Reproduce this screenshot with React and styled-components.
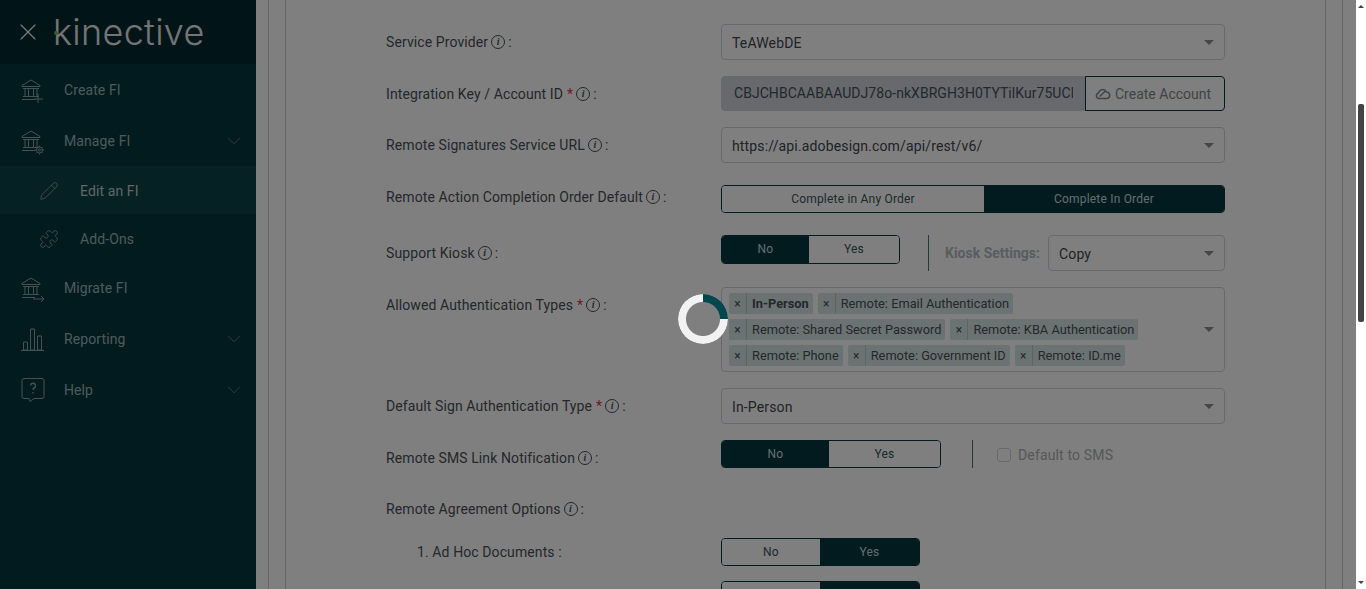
import React from "react";
import styled, { createGlobalStyle } from "styled-components";
import { Pencil, Puzzle, X, ChevronDown } from "lucide-react";

const GlobalStyle = createGlobalStyle`
  html, body {
    margin: 0;
    height: 100%;
    overflow: hidden;
    background: #fff;
  }
  * { box-sizing: border-box; }
`;

const Page = styled.div`
  position: relative;
  display: flex;
  height: 589px;
  overflow: hidden;
  font-family: Roboto, "Liberation Sans", sans-serif;
  font-size: 14px;
  color: #495057;
`;

/* sidebar */
const Sidebar = styled.aside`
  flex: 0 0 256px;
  background: #04373e;
  color: #9ab4b8;
`;

const Brand = styled.div`
  display: flex;
  align-items: center;
  height: 64px;
  padding-left: 14px;
  gap: 11px;
  background: #022a30;
  color: #f0f0f0;
`;

const Logo = styled.div`
  position: relative;
  font-family: Inter, sans-serif;
  font-weight: 300;
  font-size: 36px;
  line-height: 40px;
  letter-spacing: 0.3px;
  color: #e8e8e8;
  margin-top: -1px;
`;

const LogoDot = styled.i`
  position: absolute;
  left: 1px;
  top: 19px;
  width: 4px;
  height: 4px;
  border-radius: 50%;
  background: #5fb846;
`;

const NavItem = styled.div`
  display: flex;
  align-items: center;
  height: ${(p) => (p.$sub ? 48 : 51)}px;
  padding-left: ${(p) => (p.$sub ? 39 : 20)}px;
  padding-right: 11px;
  padding-top: ${(p) => (p.$sub ? 1 : 0)}px;
  background: ${(p) => (p.$active ? "#0a4248" : "transparent")};
  color: ${(p) => (p.$active ? "#c2cdce" : "inherit")};
`;

const NavIcon = styled.span`
  display: flex;
  align-items: center;
  width: ${(p) => (p.$sub ? 41 : 44)}px;
  color: #8ba5a9;
`;

const NavLabel = styled.span`
  flex: 1;
  letter-spacing: 0.1px;
`;

/* main column */
const Main = styled.main`
  flex: 1;
  min-width: 0;
  padding: 0 13px 0 12px;
`;

const OuterCard = styled.div`
  height: 100%;
  border: solid #cdcdcd;
  border-width: 0 1px;
  padding: 0 16px;
`;

const InnerCard = styled.div`
  height: 100%;
  border: solid #cdcdcd;
  border-width: 0 1px;
  padding: 24px 100px 0;
`;

const Form = styled.div`
  display: flex;
  flex-direction: column;
  gap: 16px;
`;

const Row = styled.div`
  display: grid;
  grid-template-columns: 335px 504px;
  height: ${(p) => p.$h || 36}px;
`;

const SubRows = styled.div`
  display: flex;
  flex-direction: column;
  gap: 7px;
`;

const Label = styled.div`
  display: flex;
  align-items: center;
  height: 36px;
  padding-left: ${(p) => (p.$indent ? 31 : 0)}px;
  letter-spacing: 0.1px;
`;

const Star = styled.span`
  color: #dc3545;
  margin-left: 4px;
`;

const InfoDot = styled.span`
  display: inline-flex;
  align-items: center;
  justify-content: center;
  width: 14px;
  height: 14px;
  margin: -1px 3px 0 3px;
  border: 1px solid #495057;
  border-radius: 50%;
  font-family: "Liberation Serif", serif;
  font-style: italic;
  font-weight: 700;
  font-size: 10px;
  line-height: 1;
`;

const Field = styled.div`
  display: flex;
  align-items: center;
  justify-content: space-between;
  height: 36px;
  padding: 1px 10px 0;
  border: 1px solid #ced4da;
  border-radius: 4px;
  background: #fff;
  letter-spacing: 0.15px;
  color: #3f4650;
`;

const Caret = styled.i`
  width: 0;
  height: 0;
  border-left: 5px solid transparent;
  border-right: 5px solid transparent;
  border-top: 5px solid #8c8c8c;
`;

const KeyGroup = styled.div`
  display: flex;
  height: 35px;
`;

const KeyInput = styled.div`
  flex: 0 0 365px;
  padding: 0 12px;
  line-height: 33px;
  background: #ced2d9;
  border: 1px solid #ced4da;
  border-radius: 4px 0 0 4px;
  white-space: nowrap;
  overflow: hidden;
  letter-spacing: 0.05px;
  color: #495057;
`;

const KeyClip = styled.div`
  overflow: hidden;
  width: 339px;
`;

const KeyButton = styled.div`
  flex: 1;
  display: flex;
  align-items: center;
  gap: 4px;
  padding-left: 9px;
  border: 1px solid #04373e;
  border-radius: 0 4px 4px 0;
  margin-left: -1px;
  letter-spacing: 0;
  color: #7d8a8c;
`;

const Toggle = styled.div`
  display: flex;
  width: ${(p) => p.$w}px;
  height: ${(p) => p.$tall || 28}px;
  margin-top: ${(p) => p.$top || 0}px;
  border: 1px solid #04373e;
  border-radius: 4px;
  overflow: hidden;
`;

const ToggleOption = styled.div`
  width: ${(p) => p.$w}px;
  flex: ${(p) => (p.$w ? "none" : 1)};
  display: flex;
  align-items: center;
  justify-content: center;
  padding-bottom: 1px;
  font-size: 12px;
  font-weight: 400;
  letter-spacing: 0.2px;
  background: ${(p) => (p.$on ? "#04373e" : "#fff")};
  color: ${(p) => (p.$on ? "#c6dcde" : "#34555a")};
`;

const Inline = styled.div`
  display: flex;
  align-items: flex-start;
`;

const Divider = styled.i`
  flex: none;
  width: 1px;
  height: ${(p) => p.$h}px;
  margin: 0 ${(p) => p.$right}px 0 ${(p) => p.$left}px;
  background: #04373e;
  opacity: 0.7;
`;

const KioskLabel = styled.span`
  font-weight: 700;
  line-height: 37px;
  color: #b4b8bc;
  margin-right: 8px;
  white-space: nowrap;
`;

const KioskSelect = styled(Field)`
  flex: 1;
`;

const CheckLine = styled.label`
  display: flex;
  align-items: center;
  gap: 7px;
  height: 30px;
  color: #adb0b4;
  letter-spacing: 0.15px;
`;

const CheckBox = styled.i`
  width: 14px;
  height: 14px;
  border: 1px solid #ced4da;
  border-radius: 3px;
  background: #fff;
`;

const MultiBox = styled.div`
  display: flex;
  align-items: center;
  height: 85px;
  padding: 0 10px 0 7px;
  border: 1px solid #ced4da;
  border-radius: 4px;
`;

const ChipWrap = styled.div`
  flex: 1;
  display: flex;
  flex-direction: column;
  gap: 5px;
`;

const ChipRow = styled.div`
  display: flex;
  gap: 5px;
`;

const Chip = styled.div`
  display: flex;
  align-items: center;
  height: 21px;
  background: #d6e6e4;
  border-radius: 2px;
  font-size: 12.8px;
  font-weight: ${(p) => (p.$bold ? 700 : 400)};
  color: #495057;
`;

const ChipRemove = styled.span`
  width: 18px;
  height: 100%;
  display: flex;
  align-items: center;
  justify-content: center;
  border-right: 1px solid #b9cac8;
  font-size: 12px;
  font-weight: 400;
  margin-right: 5px;
`;

const ChipText = styled.span`
  padding-right: 4px;
`;

/* loading overlay, native scrollbar stays above it */
const Overlay = styled.div`
  position: absolute;
  inset: 0 10px 0 0;
  background: rgba(0, 0, 0, 0.5);
`;

const Spinner = styled.div`
  position: absolute;
  left: 678px;
  top: 294px;
  width: 50px;
  height: 50px;
  border-radius: 50%;
  background: conic-gradient(#00484e 0 25%, #f2f2f2 25% 100%);
  -webkit-mask: radial-gradient(circle, transparent 16.5px, #000 17.5px);
  mask: radial-gradient(circle, transparent 16.5px, #000 17.5px);
`;

const ScrollTrack = styled.div`
  flex: 0 0 10px;
  position: relative;
  background: #fff;
`;

const ScrollThumb = styled.div`
  position: absolute;
  left: 2px;
  right: 2px;
  top: 104px;
  height: 218px;
  border-radius: 2px;
  background: #444;
`;

const ScrollArrow = styled.i`
  position: absolute;
  left: 2px;
  ${(p) => (p.$down ? "bottom: 5px;" : "top: 5px;")}
  width: 0;
  height: 0;
  border-left: 3px solid transparent;
  border-right: 3px solid transparent;
  ${(p) => (p.$down ? "border-top" : "border-bottom")}: 3px solid #444;
`;

const BankIcon = ({ extra }) => (
  <svg width="26" height="28" viewBox="0 0 26 28" fill="none" stroke="currentColor" strokeWidth="1">
    <path d="M2 9.5 11 4l9 5.5v1H2z" />
    <path d="M3 12.5h16M5 13v7M8.5 13v7M13.5 13v7M17 13v7M3 20.5h16M2 23.5h13" />
    {extra}
  </svg>
);

const PlusMark = <path d="M19 20v9M15 25h9" transform="translate(-1 -2)" />;
const GearMark = (
  <g>
    <circle cx="19.5" cy="23" r="3" />
    <circle cx="19.5" cy="23" r="1" />
    <path d="M19.5 18.5V20M19.5 26v1.5M15 23h1.5M22.5 23H24M16.3 19.8l1 1M21.7 25.2l1 1M16.3 26.2l1-1M21.7 20.8l1-1" />
  </g>
);
const ArrowMark = <path d="M13 25h11M21 22l3 3-3 3" />;

const BarsIcon = () => (
  <svg width="26" height="26" viewBox="0 0 26 26" fill="none" stroke="currentColor" strokeWidth="1">
    <path d="M1 24.5h23M3.5 24V16h4v8zM10.5 24V3h4v21zM17.5 24V10h4v14z" />
  </svg>
);

const HelpIcon = () => (
  <svg width="26" height="26" viewBox="0 0 26 26" fill="none" stroke="currentColor" strokeWidth="1">
    <path d="M4 1.5h18a2 2 0 0 1 2 2v16a2 2 0 0 1-2 2H14l-4 3-1-3H4a2 2 0 0 1-2-2v-16a2 2 0 0 1 2-2z" />
    <path d="M10.5 8.5a2.5 2.5 0 1 1 3.5 2.5c-.8.4-1 1-1 2" strokeWidth="1.4" />
    <path d="M13 15v1.6" strokeWidth="1.4" />
  </svg>
);

const CloudIcon = () => (
  <svg width="16" height="12" viewBox="0 0 16 12" fill="none" stroke="currentColor" strokeWidth="1.5">
    <path d="M4 10.5a2.8 2.8 0 0 1-.5-5.5A4.2 4.2 0 0 1 11.4 4a3.3 3.3 0 0 1 .8 6.5z" />
    <path d="M4.5 8.5 10.5 3" />
  </svg>
);

const Chev = styled(ChevronDown)`
  flex: none;
  color: #6d8589;
`;

const nav = [
  { label: "Create FI", icon: <BankIcon extra={PlusMark} /> },
  { label: "Manage FI", icon: <BankIcon extra={GearMark} />, more: true },
  { label: "Edit an FI", icon: <Pencil size={20} strokeWidth={1} />, sub: true, active: true },
  { label: "Add-Ons", icon: <Puzzle size={20} strokeWidth={1} />, sub: true },
  { label: "Migrate FI", icon: <BankIcon extra={ArrowMark} /> },
  { label: "Reporting", icon: <BarsIcon />, more: true },
  { label: "Help", icon: <HelpIcon />, more: true },
];

const FieldLabel = ({ text, required, noInfo, indent }) => (
  <Label $indent={indent}>
    {text}
    {required && <Star>*</Star>}
    {!noInfo && <InfoDot>i</InfoDot>}
    {noInfo ? "\u00a0:" : ":"}
  </Label>
);

const Select = ({ value }) => (
  <Field>
    {value}
    <Caret />
  </Field>
);

const chipRows = [
  [["In-Person", true], ["Remote: Email Authentication"]],
  [["Remote: Shared Secret Password"], ["Remote: KBA Authentication"]],
  [["Remote: Phone"], ["Remote: Government ID"], ["Remote: ID.me"]],
];

export default function App() {
  return (
    <Page>
      <GlobalStyle />
      <Sidebar>
        <Brand>
          <X size={28} strokeWidth={1} />
          <Logo>
            kinective
            <LogoDot />
          </Logo>
        </Brand>
        {nav.map((item) => (
          <NavItem key={item.label} $sub={item.sub} $active={item.active}>
            <NavIcon $sub={item.sub}>{item.icon}</NavIcon>
            <NavLabel>{item.label}</NavLabel>
            {item.more && <Chev size={22} strokeWidth={0.9} />}
          </NavItem>
        ))}
      </Sidebar>

      <Main>
        <OuterCard>
          <InnerCard>
            <Form>
              <Row>
                <FieldLabel text="Service Provider" />
                <Select value="TeAWebDE" />
              </Row>
              <Row $h={35}>
                <FieldLabel text="Integration Key / Account ID" required />
                <KeyGroup>
                  <KeyInput>
                    <KeyClip>CBJCHBCAABAAUDJ78o-nkXBRGH3H0TYTilKur75UCl</KeyClip>
                  </KeyInput>
                  <KeyButton>
                    <CloudIcon />
                    Create Account
                  </KeyButton>
                </KeyGroup>
              </Row>
              <Row>
                <FieldLabel text="Remote Signatures Service URL" />
                <Select value="https://api.adobesign.com/api/rest/v6/" />
              </Row>
              <Row $h={40}>
                <FieldLabel text="Remote Action Completion Order Default" />
                <Toggle $w={504} $top={6}>
                  <ToggleOption $w={262}>Complete in Any Order</ToggleOption>
                  <ToggleOption $on>Complete In Order</ToggleOption>
                </Toggle>
              </Row>
              <Row>
                <FieldLabel text="Support Kiosk" />
                <Inline>
                  <Toggle $w={179} $tall={29}>
                    <ToggleOption $on $w={87}>No</ToggleOption>
                    <ToggleOption>Yes</ToggleOption>
                  </Toggle>
                  <Divider $h={36} $left={28} $right={16} />
                  <KioskLabel>Kiosk Settings:</KioskLabel>
                  <KioskSelect>
                    Copy
                    <Caret />
                  </KioskSelect>
                </Inline>
              </Row>
              <Row $h={85}>
                <FieldLabel text="Allowed Authentication Types" required />
                <MultiBox>
                  <ChipWrap>
                    {chipRows.map((chips, i) => (
                      <ChipRow key={i}>
                        {chips.map(([text, bold]) => (
                          <Chip key={text} $bold={bold}>
                            <ChipRemove>×</ChipRemove>
                            <ChipText>{text}</ChipText>
                          </Chip>
                        ))}
                      </ChipRow>
                    ))}
                  </ChipWrap>
                  <Caret />
                </MultiBox>
              </Row>
              <Row>
                <FieldLabel text="Default Sign Authentication Type" required />
                <Select value="In-Person" />
              </Row>
              <Row $h={35}>
                <FieldLabel text="Remote SMS Link Notification" />
                <Inline>
                  <Toggle $w={220}>
                    <ToggleOption $on $w={107}>No</ToggleOption>
                    <ToggleOption>Yes</ToggleOption>
                  </Toggle>
                  <Divider $h={28} $left={31} $right={24} />
                  <CheckLine>
                    <CheckBox />
                    Default to SMS
                  </CheckLine>
                </Inline>
              </Row>
              <Row $h={27}>
                <FieldLabel text="Remote Agreement Options" />
              </Row>
              <SubRows>
                <Row>
                  <FieldLabel text="1. Ad Hoc Documents" noInfo indent />
                  <Toggle $w={199} $top={4}>
                    <ToggleOption $w={98}>No</ToggleOption>
                    <ToggleOption $on>Yes</ToggleOption>
                  </Toggle>
                </Row>
                <Row>
                  <div />
                  <Toggle $w={199} $top={4}>
                    <ToggleOption $w={98}>No</ToggleOption>
                    <ToggleOption $on>Yes</ToggleOption>
                  </Toggle>
                </Row>
              </SubRows>
            </Form>
          </InnerCard>
        </OuterCard>
      </Main>

      <ScrollTrack>
        <ScrollArrow />
        <ScrollThumb />
        <ScrollArrow $down />
      </ScrollTrack>

      <Overlay>
        <Spinner />
      </Overlay>
    </Page>
  );
}
